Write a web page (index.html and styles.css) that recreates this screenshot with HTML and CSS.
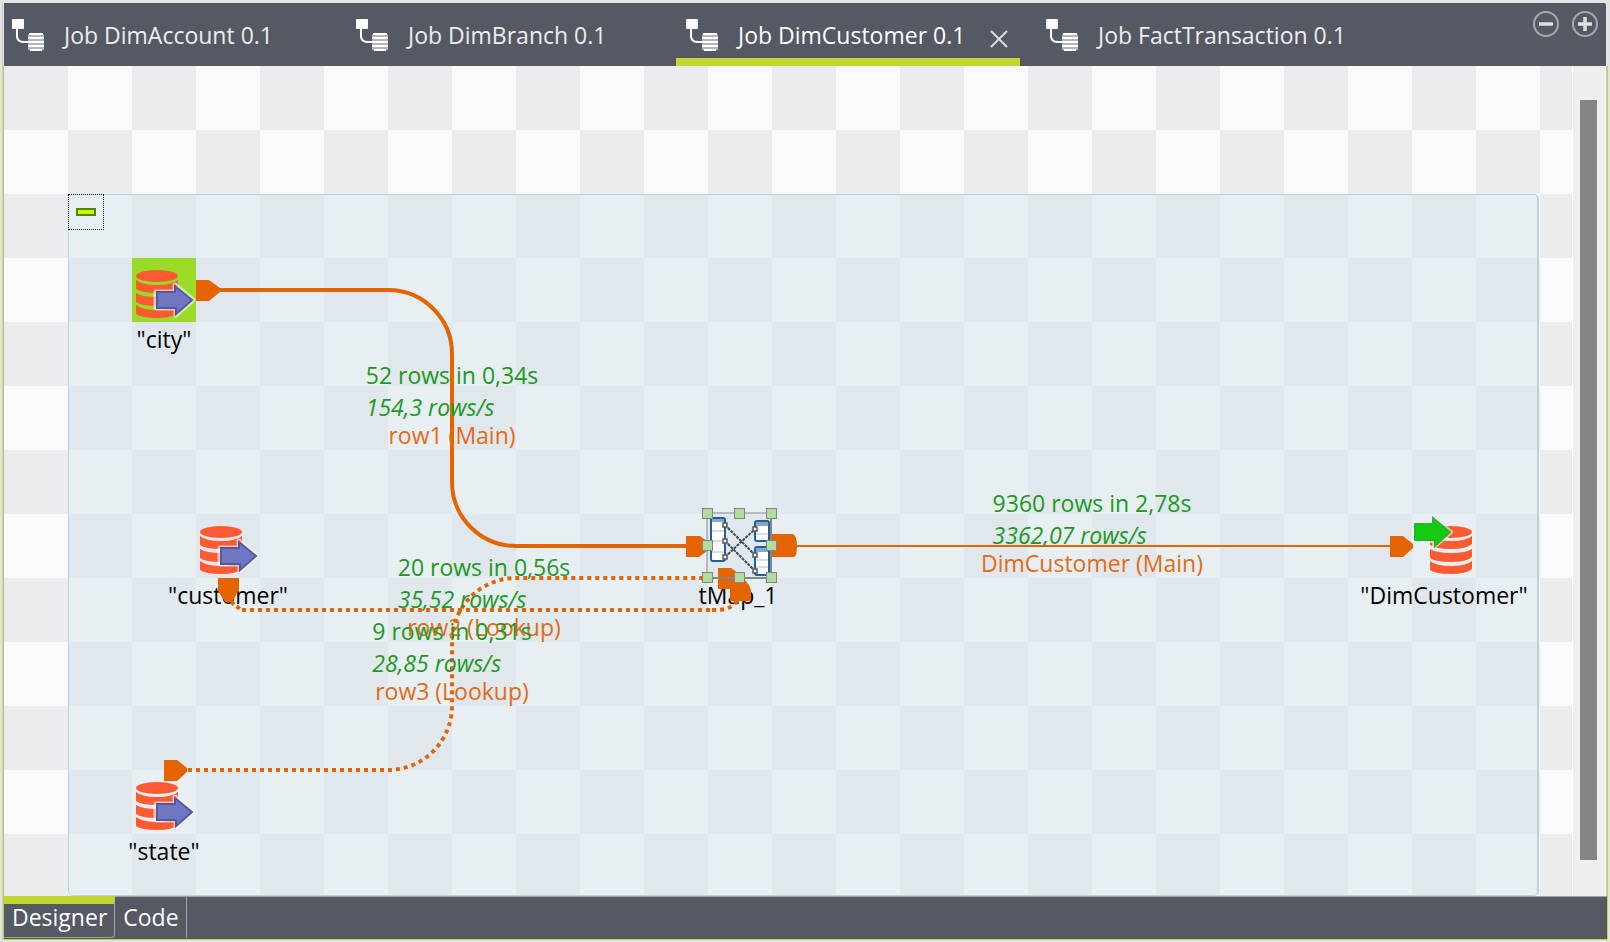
FILE: index.html
```html
<!DOCTYPE html>
<html lang="en">
<head>
<meta charset="utf-8">
<meta name="viewport" content="width=device-width, initial-scale=1">
<title>Job DimCustomer 0.1</title>
<link rel="stylesheet" href="styles.css">
</head>
<body>
<svg class="defs" aria-hidden="true">
  <defs>
    <symbol id="job" viewBox="0 0 32 32">
      <rect x="0" y="0" width="12" height="10" rx="1" fill="#fff"/>
      <path d="M5 10V18Q6 23 12 23H17" fill="none" stroke="#fff" stroke-width="2"/>
      <path d="M16 16Q16 14 24 14T32 16V30Q32 32 24 32T16 30Z" fill="#b4b6bc"/>
      <path d="M17 15H31M16 19H32M16 23H32M16 27H32M18 31H30" stroke="#fff" stroke-width="2"/>
    </symbol>
    <symbol id="cylinder" viewBox="0 0 42 48">
      <g fill="#fc5a31">
        <ellipse cx="21" cy="6" rx="21" ry="6"/>
        <path d="M0 10Q6 15 21 15T42 10V18Q37 23 21 23T0 19Z"/>
        <path d="M0 23Q6 27 21 27T42 23V31Q37 36 21 36T0 32Z"/>
        <path d="M0 35Q6 40 21 40T42 35V43Q37 48 21 48T0 44Z"/>
      </g>
    </symbol>
    <symbol id="db-in" viewBox="0 0 64 64">
      <use href="#cylinder" x="4" y="12" width="42" height="48"/>
      <path d="M24 34H43V27L61 42L44 57V50H24Z" fill="#f4f3f7" stroke="#f4f3f7" stroke-width="5" stroke-linejoin="round" opacity=".65"/>
      <path d="M25 34H43V28L60 42L44 56V50H25Z" fill="#7076c2" stroke="#5459a0" stroke-width="2"/>
    </symbol>
    <symbol id="db-out" viewBox="0 0 64 64">
      <use href="#cylinder" x="18" y="12" width="42" height="48"/>
      <path d="M2 10H20V3L39 18L22 33V27H2Z" fill="#f5faf5" stroke="#f5faf5" stroke-width="4" stroke-linejoin="round" opacity=".65"/>
      <path d="M3 10H21V4L38 18L23 32V26H3Z" fill="#16ca12" stroke="#20b92a" stroke-width="2"/>
    </symbol>
    <symbol id="tmap" viewBox="0 0 64 64">
      <g fill="#fff" stroke="#22609a" stroke-width="2">
        <rect x="5" y="4" width="14" height="43" rx="2"/>
        <rect x="49" y="7" width="14" height="20" rx="2"/>
        <rect x="49" y="33" width="14" height="28" rx="2"/>
      </g>
      <path d="M6 5H18V8H6ZM50 8H62V12H50ZM50 34H62V38H50Z" fill="#86a8c8"/>
      <path d="M6 17H18M6 27H18M6 38H18M50 20H62M50 46H62M50 53H62" stroke="#d8dde2" stroke-width="2"/>
      <path d="M19 11L49 41M19 27L49 57M19 43L49 15" stroke="#46484d" stroke-width="2" stroke-dasharray="3 1"/>
      <g fill="#fff" stroke="#55575c" stroke-width="1.500">
        <path d="M17 9H21V13H17ZM17 25H21V29H17ZM17 41H21V45H17ZM47 13H51V17H47ZM47 39H51V43H47ZM47 55H51V59H47Z"/>
      </g>
    </symbol>
  </defs>
</svg>
<main class="editor">
  <header class="tabbar">
    <nav class="tabs" aria-label="Open jobs">
      <div class="tab tab-first"><button class="tab-button" type="button"><svg class="job-icon"><use href="#job"/></svg>Job DimAccount 0.1</button></div>
      <div class="tab tab-short"><button class="tab-button" type="button"><svg class="job-icon"><use href="#job"/></svg>Job DimBranch 0.1</button></div>
      <div class="tab tab-active"><button class="tab-button" type="button" aria-current="page"><svg class="job-icon"><use href="#job"/></svg>Job DimCustomer 0.1</button><button class="close" type="button" aria-label="Close tab"><svg viewBox="0 0 18 18"><path d="M1 1L17 17M17 1L1 17" fill="none" stroke="#dcdde0" stroke-width="2"/></svg></button></div>
      <div class="tab tab-last"><button class="tab-button" type="button"><svg class="job-icon"><use href="#job"/></svg>Job FactTransaction 0.1</button></div>
    </nav>
    <div class="window-controls">
      <button class="round" type="button" aria-label="Minimize"><svg viewBox="0 0 26 26"><circle cx="13" cy="13" r="12" fill="none" stroke="#a6a8ad" stroke-width="2"/><path d="M6 13H20" stroke="#dfe0e2" stroke-width="3.500"/></svg></button>
      <button class="round" type="button" aria-label="Maximize"><svg viewBox="0 0 26 26"><circle cx="13" cy="13" r="12" fill="none" stroke="#a6a8ad" stroke-width="2"/><path d="M6 13H20M13 6V20" stroke="#dfe0e2" stroke-width="3.500"/></svg></button>
    </div>
  </header>

  <section class="workspace">
    <div class="canvas">
      <div class="subjob"><button class="collapse" type="button" aria-label="Collapse subjob"><span class="minus"></span></button></div>

      <button class="node node-city" type="button"><svg class="node-icon start"><use href="#db-in"/></svg><span>"city"</span></button>
      <button class="node node-customer" type="button"><svg class="node-icon"><use href="#db-in"/></svg><span>"customer"</span></button>
      <button class="node node-state" type="button"><svg class="node-icon"><use href="#db-in"/></svg><span>"state"</span></button>
      <button class="node node-tmap" type="button"><svg class="node-icon"><use href="#tmap"/></svg><span>tMap_1</span></button>
      <button class="node node-dim" type="button"><svg class="node-icon"><use href="#db-out"/></svg><span>"DimCustomer"</span></button>

      <svg class="links" aria-hidden="true">
        <g fill="none" stroke="#e66400" stroke-width="4">
          <path d="M214 224H384A64 64 0 0 1 448 288V416A64 64 0 0 0 512 480H684"/>
          <path d="M227 536L236 543" stroke-dasharray="4 3"/>
          <path d="M238 544H710" stroke-dasharray="4 4"/>
          <path d="M708 544Q728 545 733 534" stroke-dasharray="4 4"/>
          <path d="M184 704H384A64 64 0 0 0 448 640V576A64 64 0 0 1 512 512H702" stroke-dasharray="4 4"/>
          <path d="M792 480H1388" stroke-width="2"/>
        </g>
        <g fill="#e66400">
          <path d="M192 214H205L216 222V226L205 235H192Z"/>
          <path d="M682 470H696L703 475V485L695 491H682Z"/>
          <path d="M214 512H235V524L228 536H221L214 525Z"/>
          <path d="M160 694H173L183 702V706L173 715H160Z"/>
          <path d="M767 468H789Q793 470 793 480T790 491H767Z"/>
          <path d="M714 502H727L737 509L745 519L747 524V535H726V523H714Z"/>
          <path d="M1386 470H1399L1409 478V482L1399 491H1386Z"/>
        </g>
      </svg>

      <div class="flow flow-row1"><div class="stats"><p>52 rows in 0,34s</p><p><em>154,3 rows/s</em></p></div><p class="flow-name">row1 (Main)</p></div>
      <div class="flow flow-row2"><div class="stats"><p>20 rows in 0,56s</p><p><em>35,52 rows/s</em></p></div><p class="flow-name">row2 (Lookup)</p></div>
      <div class="flow flow-row3"><div class="stats"><p>9 rows in 0,31s</p><p><em>28,85 rows/s</em></p></div><p class="flow-name">row3 (Lookup)</p></div>
      <div class="flow flow-dim"><div class="stats"><p>9360 rows in 2,78s</p><p><em>3362,07 rows/s</em></p></div><p class="flow-name">DimCustomer (Main)</p></div>

      <svg class="selection" viewBox="0 0 76 76" aria-hidden="true">
        <path d="M6 71V6H71" fill="none" stroke="#858585" stroke-width="1"/>
        <path d="M70 6V71H6" fill="none" stroke="#858585" stroke-width="2"/>
        <g fill="#b0dd9d" stroke="#858585">
          <rect x="1.500" y="1.500" width="10" height="10"/><rect x="33.500" y="1.500" width="10" height="10"/><rect x="65.500" y="1.500" width="10" height="10"/>
          <rect x="1.500" y="33.500" width="10" height="10"/><rect x="65.500" y="33.500" width="10" height="10"/>
          <rect x="1.500" y="65.500" width="10" height="10"/><rect x="33.500" y="65.500" width="10" height="10"/><rect x="65.500" y="65.500" width="10" height="10"/>
        </g>
      </svg>
    </div>
    <div class="scrollbar"><div class="thumb"></div></div>
  </section>

  <footer class="views">
    <button class="view view-active" type="button" aria-current="page">Designer</button>
    <button class="view" type="button">Code</button>
  </footer>
</main>
</body>
</html>
```
FILE: styles.css
```css
* { box-sizing: border-box; }

body {
  margin: 0;
  height: 100vh;
  padding: 3px 2px 2px;
  background: #e3e3e3;
  font-family: "Open Sans", "Noto Sans", sans-serif;
  font-size: 23px;
  line-height: 32px;
  color: #000;
}

button {
  margin: 0;
  padding: 0;
  border: 0;
  background: none;
  font: inherit;
  color: inherit;
}

p { margin: 0; }
svg { display: block; }
.defs { position: absolute; width: 0; height: 0; }

.editor {
  display: flex;
  flex-direction: column;
  height: 100%;
  border-left: 1px solid #c8c8c8;
}

.tabbar {
  display: flex;
  flex: none;
  justify-content: space-between;
  height: 63px;
  margin: 0 2px 0 1px;
  background: #555963;
  border-top-right-radius: 2px;
}

.tabs { display: flex; }

.tab {
  display: flex;
  flex: none;
  align-items: center;
  justify-content: space-between;
  width: 344px;
  padding: 0 12px 0 10px;
  border-bottom: 8px solid transparent;
  color: #ecedee;
}

.tab-first { width: 342px; padding-left: 8px; }
.tab-short { width: 330px; }
.tab-last { margin-left: 16px; }
.tab-active { border-bottom-color: #c0d72f; color: #fff; }

.tab-button {
  display: flex;
  align-items: center;
  gap: 20px;
  height: 100%;
  padding-top: 8px;
  white-space: nowrap;
}

.job-icon { width: 32px; height: 32px; flex: none; }
.close { padding-top: 16px; }
.close svg { width: 18px; height: 18px; }

.window-controls {
  display: flex;
  gap: 13px;
  align-items: flex-start;
  padding: 8px 8px 0 0;
}

.round svg { width: 26px; height: 26px; }

.workspace {
  display: flex;
  flex: 1;
  min-height: 0;
  border-left: 1px solid #c0d72f;
  border-right: 1px solid #c0d72f;
}

.canvas {
  position: relative;
  flex: 1;
  overflow: hidden;
  background: repeating-conic-gradient(#f9fbfa 0 25%, #ebecee 0 50%) 0 0 / 128px 128px;
}

.subjob {
  position: absolute;
  inset: 128px 33px 0 64px;
  border: 1px solid #c0d0da;
  border-right-width: 2px;
  border-radius: 5px;
  background: rgba(213, 227, 235, 0.5);
}

.collapse {
  display: flex;
  align-items: center;
  justify-content: center;
  width: 36px;
  height: 36px;
  margin: -1px;
  border: 1px dotted #222;
}

.minus {
  width: 20px;
  height: 8px;
  border: 2px solid #5d7f08;
  background: #bfff00;
}

.node {
  position: absolute;
  display: flex;
  flex-direction: column;
  align-items: center;
  width: 192px;
}

.node-icon { width: 64px; height: 64px; }
.node-icon.start { background: #99db27; }
.node span { padding-top: 1px; }
.node-city { left: 64px; top: 192px; }
.node-customer { left: 128px; top: 448px; }
.node-state { left: 64px; top: 704px; }
.node-tmap { left: 638px; top: 448px; }
.node-dim { left: 1344px; top: 448px; }

.links {
  position: absolute;
  left: 0;
  top: 0;
  width: 100%;
  height: 100%;
  pointer-events: none;
}

.flow {
  position: absolute;
  display: flex;
  flex-direction: column;
  align-items: center;
  width: 240px;
  color: #20991f;
  white-space: nowrap;
}

.flow-name { line-height: 24px; color: #e66a14; }
.flow-row1 { left: 328px; top: 293px; }
.flow-row2 { left: 360px; top: 485px; }
.flow-row3 { left: 328px; top: 549px; }
.flow-dim { left: 968px; top: 421px; }

.selection {
  position: absolute;
  left: 697px;
  top: 441px;
  width: 76px;
  height: 76px;
}

.scrollbar {
  flex: none;
  width: 35px;
  padding: 34px 9px 36px 7px;
  border-left: 1px solid #fff;
  border-right: 1px solid #c8c8c8;
  background: #efefef;
}

.thumb { height: 100%; background: #858585; }

.views {
  display: flex;
  flex: none;
  height: 44px;
  padding-bottom: 1px;
  border: 1px solid #c0d72f;
  border-top: 0;
  background: #555963;
  color: #fff;
}

.view {
  padding: 0 7px 2px 8px;
  border-top: 1px solid #a0a2a6;
  border-right: 1px solid #a0a2a6;
  line-height: 24px;
}

.views::after {
  content: "";
  flex: 1;
  border-top: 1px solid #a0a2a6;
}

.view-active {
  padding-bottom: 8px;
  border-top: 8px solid #c0d72f;
  border-bottom: 1px solid #a0a2a6;
  border-bottom-right-radius: 4px;
}
```
